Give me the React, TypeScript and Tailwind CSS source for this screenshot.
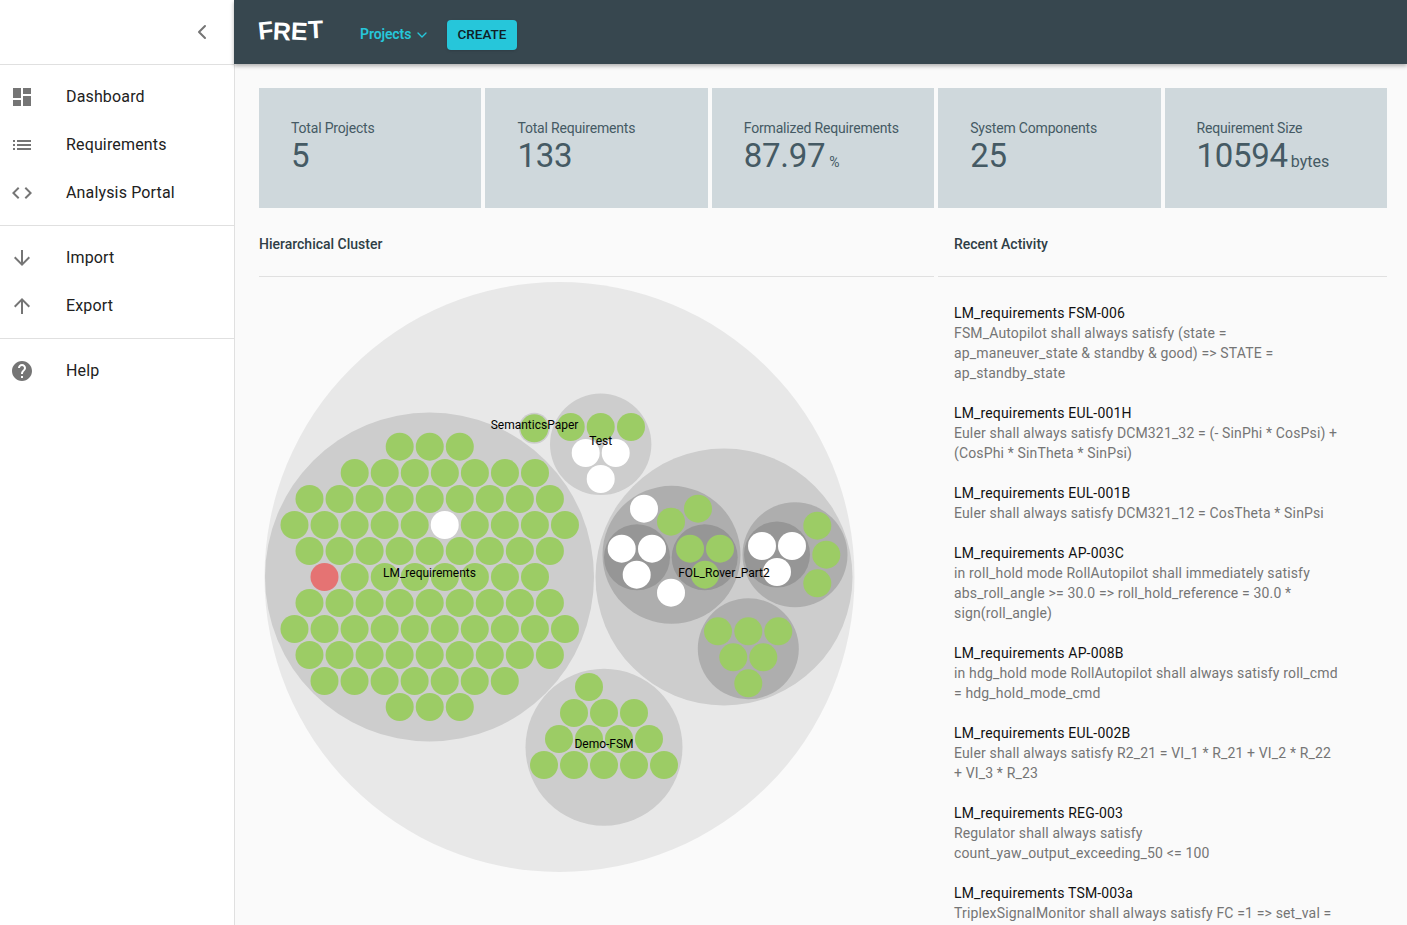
import { ChevronDown, ChevronLeft } from "lucide-react"
import { JSX, ReactNode } from "react"

const GREEN = "#9ccc65"
const WHITE = "#ffffff"

const font = { fontFamily: "Roboto, sans-serif" }

const stats: { label: string; value: string; unit?: string; unitClass?: string }[] = [
  { label: "Total Projects", value: "5" },
  { label: "Total Requirements", value: "133" },
  { label: "Formalized Requirements", value: "87.97", unit: "%", unitClass: "text-sm ml-[4px]" },
  { label: "System Components", value: "25" },
  { label: "Requirement Size", value: "10594", unit: "bytes", unitClass: "text-base ml-[3px]" },
]

const activity = [
  {
    title: "LM_requirements FSM-006",
    text: "FSM_Autopilot shall always satisfy (state = ap_maneuver_state & standby & good) => STATE = ap_standby_state",
  },
  {
    title: "LM_requirements EUL-001H",
    text: "Euler shall always satisfy DCM321_32 = (- SinPhi * CosPsi) + (CosPhi * SinTheta * SinPsi)",
  },
  {
    title: "LM_requirements EUL-001B",
    text: "Euler shall always satisfy DCM321_12 = CosTheta * SinPsi",
  },
  {
    title: "LM_requirements AP-003C",
    text: "in roll_hold mode RollAutopilot shall immediately satisfy abs_roll_angle >= 30.0 => roll_hold_reference = 30.0 * sign(roll_angle)",
  },
  {
    title: "LM_requirements AP-008B",
    text: "in hdg_hold mode RollAutopilot shall always satisfy roll_cmd = hdg_hold_mode_cmd",
  },
  {
    title: "LM_requirements EUL-002B",
    text: "Euler shall always satisfy R2_21 = VI_1 * R_21 + VI_2 * R_22 + VI_3 * R_23",
  },
  {
    title: "LM_requirements REG-003",
    text: "Regulator shall always satisfy count_yaw_output_exceeding_50 <= 100",
  },
  {
    title: "LM_requirements TSM-003a",
    text: "TriplexSignalMonitor shall always satisfy FC =1 => set_val =",
  },
]

// leaf circles of the LM_requirements project, row by row: y, first x, count
const lmRows: [number, number, number][] = [
  [446.7, 399.7, 3],
  [473, 354.7, 7],
  [499, 309.5, 9],
  [525, 294.5, 10],
  [551, 309.5, 9],
  [577, 354.7, 7],
  [603, 309.5, 9],
  [629, 294.5, 10],
  [655, 309.5, 9],
  [681, 324.5, 7],
  [707, 399.7, 3],
]

type Dot = [number, number, string]

const lmDots: Dot[] = lmRows.flatMap(([y, x0, n]) =>
  Array.from({ length: n }, (_, i): Dot => {
    const x = x0 + i * 30.05
    return [x, y, y === 525 && i === 5 ? WHITE : GREEN]
  }),
)

const otherDots: Dot[] = [
  // SemanticsPaper
  [534.3, 428.3, GREEN],
  // Test
  [570.7, 427, GREEN],
  [600.7, 427, GREEN],
  [631, 427, GREEN],
  [585.7, 453, WHITE],
  [615.7, 453, WHITE],
  [600.7, 479, WHITE],
  // FOL_Rover_Part2
  [644, 508.7, WHITE],
  [698, 508.7, GREEN],
  [671, 521.7, GREEN],
  [671, 592.7, WHITE],
  [621.7, 548.7, WHITE],
  [652, 548.7, WHITE],
  [636.7, 574.7, WHITE],
  [690, 548.7, GREEN],
  [720, 548.7, GREEN],
  [705, 574.7, GREEN],
  [762, 546, WHITE],
  [792, 546, WHITE],
  [777, 572, WHITE],
  [817.3, 525.7, GREEN],
  [826.3, 554.7, GREEN],
  [817.3, 583.3, GREEN],
  [718, 631.3, GREEN],
  [748.3, 631.3, GREEN],
  [778.3, 631.3, GREEN],
  [733.3, 657.3, GREEN],
  [763.3, 657.3, GREEN],
  [748.3, 683.3, GREEN],
  // Demo-FSM
  [589, 687, GREEN],
  [574, 713, GREEN],
  [604, 713, GREEN],
  [634, 713, GREEN],
  [559, 739, GREEN],
  [589, 739, GREEN],
  [619, 739, GREEN],
  [649, 739, GREEN],
  [544, 765, GREEN],
  [574, 765, GREEN],
  [604, 765, GREEN],
  [634, 765, GREEN],
  [664, 765, GREEN],
]

const groups: [number, number, number, string][] = [
  [559.5, 577, 295, "#e8e8e8"],
  [429.5, 577, 164.5, "#cdcdcd"],
  [534.3, 428.3, 15.5, "#cdcdcd"],
  [600.7, 444.3, 50.7, "#cdcdcd"],
  [724, 577, 128.5, "#cdcdcd"],
  [604, 747.3, 78.5, "#cdcdcd"],
  [671.5, 554.8, 69, "#aeaeae"],
  [795, 554.8, 52.5, "#aeaeae"],
  [748.3, 648.7, 50.5, "#aeaeae"],
  [637, 557.3, 33, "#969696"],
  [704.7, 557.3, 33, "#969696"],
  [777, 554.5, 33, "#969696"],
]

const labels: [number, number, string][] = [
  [534.5, 426, "SemanticsPaper"],
  [600.7, 442, "Test"],
  [429.5, 574, "LM_requirements"],
  [724, 574, "FOL_Rover_Part2"],
  [604, 745, "Demo-FSM"],
]

function ClusterChart(): JSX.Element {
  return (
    <svg viewBox="259 277 675 600" className="block w-[675px] h-[600px]">
      {groups.map(([x, y, r, fill]) => (
        <circle key={`${x}-${y}`} cx={x} cy={y} r={r} fill={fill} />
      ))}
      {[...lmDots, ...otherDots].map(([x, y, fill]) => (
        <circle key={`${x}-${y}`} cx={x} cy={y} r={14} fill={fill} />
      ))}
      <circle cx={324.5} cy={577} r={14} fill="#e57373" />
      {labels.map(([x, y, text]) => (
        <text
          key={text}
          x={x}
          y={y}
          textAnchor="middle"
          dominantBaseline="middle"
          fontSize={12}
          fill="#000"
        >
          {text}
        </text>
      ))}
    </svg>
  )
}

function NavItem({ icon, text }: { icon: ReactNode; text: string }): JSX.Element {
  return (
    <div className="flex items-center h-12">
      <div className="w-[66px] pl-[10px] flex items-center text-[#757575]">{icon}</div>
      <span className="text-base tracking-[0.15px] text-[#212121]">{text}</span>
    </div>
  )
}

function Icon({ children }: { children: ReactNode }): JSX.Element {
  return (
    <svg viewBox="0 0 24 24" className="w-6 h-6" fill="currentColor">
      {children}
    </svg>
  )
}

function Sidebar(): JSX.Element {
  return (
    <aside className="w-[235px] shrink-0 bg-white border-r border-[#e0e0e0] h-full">
      <div className="h-[65px] border-b border-[#e0e0e0] flex items-center justify-end pr-[20px]">
        <ChevronLeft className="w-6 h-6 text-[#757575]" strokeWidth={2} />
      </div>
      <nav className="py-2 border-b border-[#e0e0e0]">
        <NavItem
          text="Dashboard"
          icon={
            <Icon>
              <path d="M3 13h8V3H3v10zm0 8h8v-6H3v6zm10 0h8V11h-8v10zm0-18v6h8V3h-8z" />
            </Icon>
          }
        />
        <NavItem
          text="Requirements"
          icon={
            <Icon>
              <path d="M3 13h2v-2H3v2zm0 4h2v-2H3v2zm0-8h2V7H3v2zm4 4h14v-2H7v2zm0 4h14v-2H7v2zM7 7v2h14V7H7z" />
            </Icon>
          }
        />
        <NavItem
          text="Analysis Portal"
          icon={
            <Icon>
              <path d="M9.4 16.6 4.8 12l4.6-4.6L8 6l-6 6 6 6 1.4-1.4zm5.2 0 4.6-4.6-4.6-4.6L16 6l6 6-6 6-1.4-1.4z" />
            </Icon>
          }
        />
      </nav>
      <nav className="py-2 border-b border-[#e0e0e0]">
        <NavItem
          text="Import"
          icon={
            <Icon>
              <path d="m20 12-1.41-1.41L13 16.17V4h-2v12.17l-5.58-5.59L4 12l8 8 8-8z" />
            </Icon>
          }
        />
        <NavItem
          text="Export"
          icon={
            <Icon>
              <path d="m4 12 1.41 1.41L11 7.83V20h2V7.83l5.58 5.59L20 12l-8-8-8 8z" />
            </Icon>
          }
        />
      </nav>
      <nav className="py-2">
        <NavItem
          text="Help"
          icon={
            <Icon>
              <path d="M12 2C6.48 2 2 6.48 2 12s4.48 10 10 10 10-4.48 10-10S17.52 2 12 2zm1 17h-2v-2h2v2zm2.07-7.75-.9.92C13.45 12.9 13 13.5 13 15h-2v-.5c0-1.1.45-2.1 1.17-2.83l1.24-1.26c.37-.36.59-.86.59-1.41 0-1.1-.9-2-2-2s-2 .9-2 2H8c0-2.21 1.79-4 4-4s4 1.79 4 4c0 .88-.36 1.68-.93 2.25z" />
            </Icon>
          }
        />
      </nav>
    </aside>
  )
}

function Header(): JSX.Element {
  return (
    <header className="relative z-10 -ml-px h-16 shrink-0 bg-[#37474f] flex items-center pl-6 pt-[5px] shadow-[0_2px_4px_rgba(0,0,0,0.3)]">
      <span
        className="w-[102px] -mt-[8px] flex text-white text-[25px] leading-none font-bold"
        style={{ fontFamily: "'Liberation Sans', sans-serif" }}
      >
        <span className="inline-block -rotate-6">F</span>
        <span className="inline-block rotate-3 translate-y-[1px]">R</span>
        <span className="inline-block rotate-3 translate-y-[1px]">E</span>
        <span className="inline-block -rotate-3 -translate-y-[1px]">T</span>
      </span>
      <div className="flex items-center gap-[3px] text-[#26c6da] text-[14px] tracking-[-0.1px] font-semibold w-[87px]">
        Projects
        <ChevronDown className="w-4 h-4" strokeWidth={2} />
      </div>
      <button className="h-[30px] w-[70px] rounded bg-[#26c6da] text-[#102027] text-[13.5px] font-medium shadow-sm">
        CREATE
      </button>
    </header>
  )
}

function StatCard({
  label,
  value,
  unit,
  unitClass,
}: {
  label: string
  value: string
  unit?: string
  unitClass?: string
}): JSX.Element {
  return (
    <div className="h-[120px] bg-[#cfd8dc] pl-8 pt-[30px] text-[#455a64]">
      <div className="text-sm leading-[20px] tracking-[-0.18px]">{label}</div>
      <div className="mt-px text-[33px] leading-[34px] tracking-[-0.3px]">
        {value}
        {unit && <span className={`${unitClass} tracking-normal`}>{unit}</span>}
      </div>
    </div>
  )
}

function SectionTitle({ text, className }: { text: string; className?: string }): JSX.Element {
  return (
    <div
      className={`h-[69px] pt-1 border-b border-[#e0e0e0] flex items-center text-sm font-medium text-[#2f3e46] ${className ?? ""}`}
    >
      {text}
    </div>
  )
}

export default function App(): JSX.Element {
  return (
    <div className="flex h-screen overflow-hidden bg-[#fafafa]" style={font}>
      <Sidebar />
      <div className="flex-1 min-w-0 flex flex-col">
        <Header />
        <main className="flex-1 min-h-0 overflow-hidden pl-6 pr-5 pt-6">
          <div className="grid grid-cols-5 gap-1">
            {stats.map(s => (
              <StatCard key={s.label} {...s} />
            ))}
          </div>
          <div className="flex gap-1 -mt-px">
            <section className="w-[675px] shrink-0">
              <SectionTitle text="Hierarchical Cluster" className="mt-px" />
              <ClusterChart />
            </section>
            <section className="flex-1 min-w-0">
              <SectionTitle text="Recent Activity" className="mt-px pl-4" />
              <div className="pl-4 pr-[47px] pt-[26px] flex flex-col gap-5">
                {activity.map(a => (
                  <div key={a.title} className="text-sm leading-5 tracking-[0.15px]">
                    <div className="text-[#111111]">{a.title}</div>
                    <div className="text-[#757575]">{a.text}</div>
                  </div>
                ))}
              </div>
            </section>
          </div>
        </main>
      </div>
    </div>
  )
}
